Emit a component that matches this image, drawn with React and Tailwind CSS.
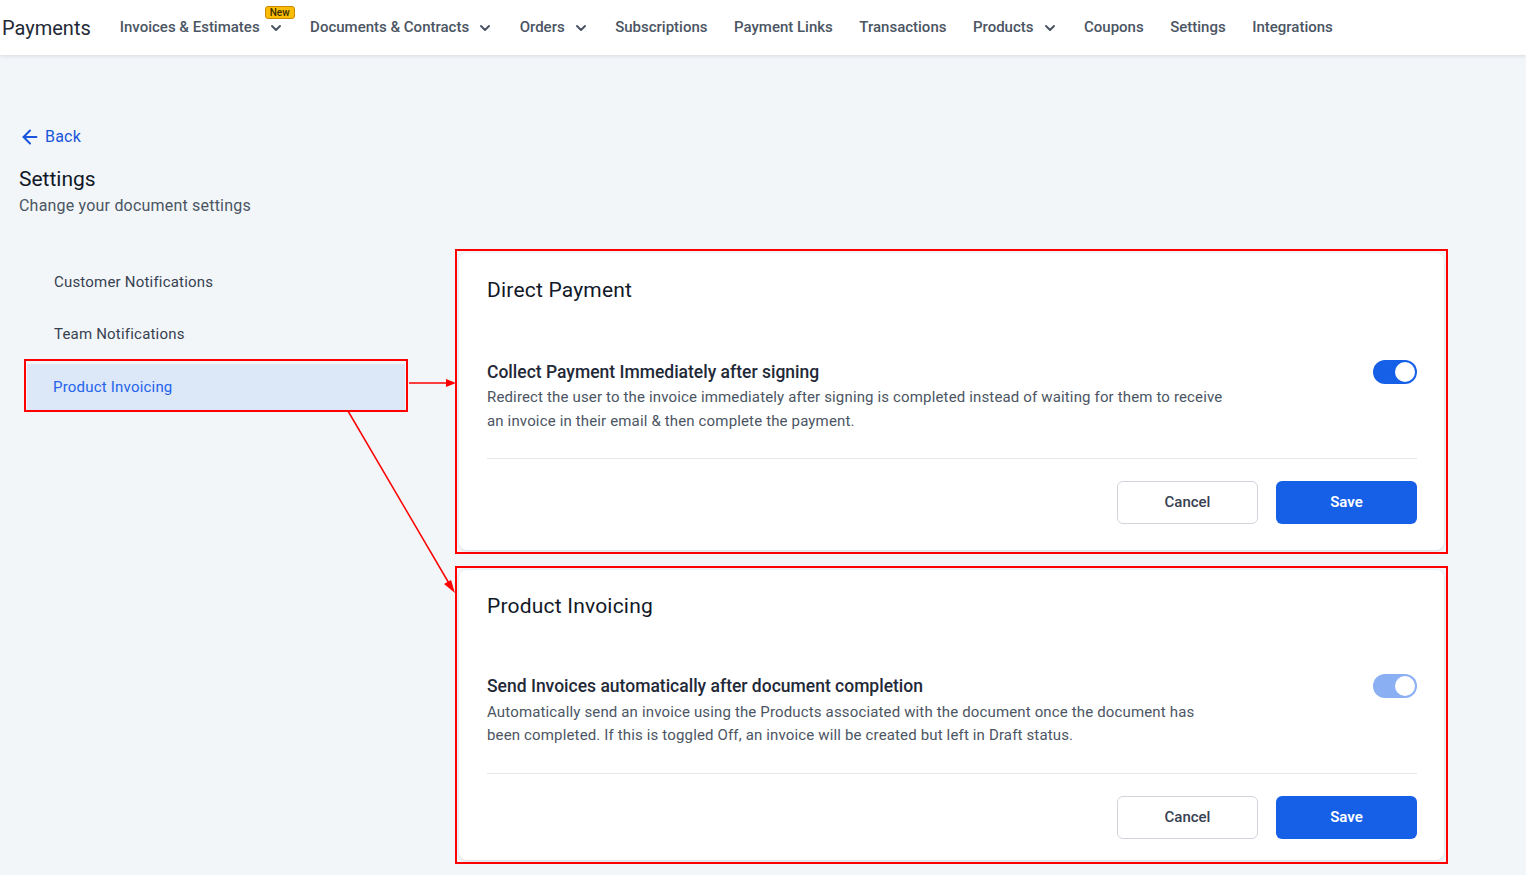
import { ChevronDown, ArrowLeft } from "lucide-react"

const navItems = [
  { label: "Invoices & Estimates", menu: true, badge: "New" },
  { label: "Documents & Contracts", menu: true },
  { label: "Orders", menu: true },
  { label: "Subscriptions" },
  { label: "Payment Links" },
  { label: "Transactions" },
  { label: "Products", menu: true },
  { label: "Coupons" },
  { label: "Settings" },
  { label: "Integrations" },
]

const Toggle = ({ faded }) => (
  <div
    className={`flex h-6 w-11 shrink-0 items-center justify-end rounded-full px-[2px] ${
      faded ? "bg-[#8aaff3]" : "bg-[#1660e8]"
    }`}
  >
    <div className="h-5 w-5 rounded-full bg-white" />
  </div>
)

// the second card sits a little tighter than the first one
const SettingCard = ({ title, heading, text, faded, compact }) => (
  <div className="border-2 border-[#ff0000] p-0.5">
    <div
      className={`rounded-lg bg-white pl-7 pr-[27px] shadow-[0_1px_3px_rgba(15,23,42,0.12)] ${
        compact ? "pt-[22px] pb-[21px]" : "pt-[23px] pb-[26px]"
      }`}
    >
      <h2 className="text-[21px] leading-7 tracking-[0.2px] text-[#111827]">
        {title}
      </h2>
      <div
        className={`flex items-start justify-between ${
          compact ? "mt-[54px]" : "mt-[56px]"
        }`}
      >
        <div>
          <p className="text-[17.5px] font-medium leading-6 text-[#1f2937]">
            {heading}
          </p>
          <p
            className={`max-w-[740px] text-[15px] tracking-[0.15px] text-[#4b5563] ${
              compact ? "mt-[3px] leading-[23px]" : "mt-px leading-6"
            }`}
          >
            {text}
          </p>
        </div>
        <Toggle faded={faded} />
      </div>
      <div
        className={`h-px bg-[#e5e7eb] ${compact ? "mt-[26px]" : "mt-[25px]"}`}
      />
      <div className="mt-[22px] flex justify-end gap-[18px]">
        <button className="h-[43px] w-[141px] rounded-md border border-[#d1d5db] bg-white text-[15px] font-medium text-[#374151]">
          Cancel
        </button>
        <button className="h-[43px] w-[141px] rounded-md bg-[#1660e8] text-[15px] font-semibold text-white">
          Save
        </button>
      </div>
    </div>
  </div>
)

const App = () => {
  return (
    <div className="relative h-[875px] overflow-hidden bg-[#f2f6f9] font-['Roboto',sans-serif]">
      <header className="flex h-[55px] items-center bg-white pl-[2px] shadow-[0_1px_4px_rgba(15,23,42,0.12)]">
        <span className="text-[20px] text-[#1f2937]">Payments</span>
        <nav className="ml-[29px] flex items-center gap-[26.5px]">
          {navItems.map((item) => (
            <div
              key={item.label}
              className="relative flex items-center gap-[8px] text-[15px] font-medium text-[#4b5563]"
            >
              {item.label}
              {item.menu && (
                <ChevronDown className="h-4 w-4" strokeWidth={3} />
              )}
              {item.badge && (
                <span className="absolute -top-[10px] left-[145px] rounded-[3px] border border-[#c98a00] bg-[#fbbc05] px-[4px] text-[10px] leading-[11px] text-[#3b2f00]">
                  {item.badge}
                </span>
              )}
            </div>
          ))}
        </nav>
      </header>

      <main className="px-[19px] pt-[70px]">
        <a className="flex items-center gap-[4px] text-[16px] tracking-[0.2px] text-[#1a56db]">
          <ArrowLeft className="h-[22px] w-[22px]" strokeWidth={2.2} />
          Back
        </a>
        <h1 className="mt-[16px] text-[21px] leading-7 text-[#111827]">
          Settings
        </h1>
        <p className="mt-px text-[16px] leading-6 tracking-[0.2px] text-[#4b5563]">
          Change your document settings
        </p>

        <div className="mt-[31px] flex items-start gap-[47px]">
          <div className="mt-[10px] w-[389px] shrink-0 pl-[5px]">
            <div className="flex h-[46px] items-center pl-[30px] text-[15px] tracking-[0.2px] text-[#374151]">
              Customer Notifications
            </div>
            <div className="mt-[6px] flex h-[46px] items-center pl-[30px] text-[15px] tracking-[0.2px] text-[#374151]">
              Team Notifications
            </div>
            <div className="mt-[2px] border-2 border-[#ff0000] px-px pt-[3px]">
              <div className="flex h-[46px] items-center bg-[#dce7f8] pl-[26px] text-[15px] tracking-[0.2px] text-[#2563eb]">
                Product Invoicing
              </div>
            </div>
          </div>

          <div className="flex w-[993px] shrink-0 flex-col gap-[12px]">
            <SettingCard
              title="Direct Payment"
              heading="Collect Payment Immediately after signing"
              text="Redirect the user to the invoice immediately after signing is completed instead of waiting for them to receive an invoice in their email & then complete the payment."
            />
            <SettingCard
              title="Product Invoicing"
              heading="Send Invoices automatically after document completion"
              text="Automatically send an invoice using the Products associated with the document once the document has been completed. If this is toggled Off, an invoice will be created but left in Draft status."
              faded
              compact
            />
          </div>
        </div>
      </main>

      <svg
        className="pointer-events-none absolute left-0 top-0"
        width="1526"
        height="875"
      >
        <line x1="409" y1="383" x2="448" y2="383" stroke="#ff0000" strokeWidth="1.5" />
        <polygon points="456,383 446,379 446,387" fill="#ff0000" />
        <line x1="348" y1="411" x2="450" y2="585" stroke="#ff0000" strokeWidth="1.5" />
        <polygon points="455,593 444,584 451,580" fill="#ff0000" />
      </svg>
    </div>
  )
}

export default App
